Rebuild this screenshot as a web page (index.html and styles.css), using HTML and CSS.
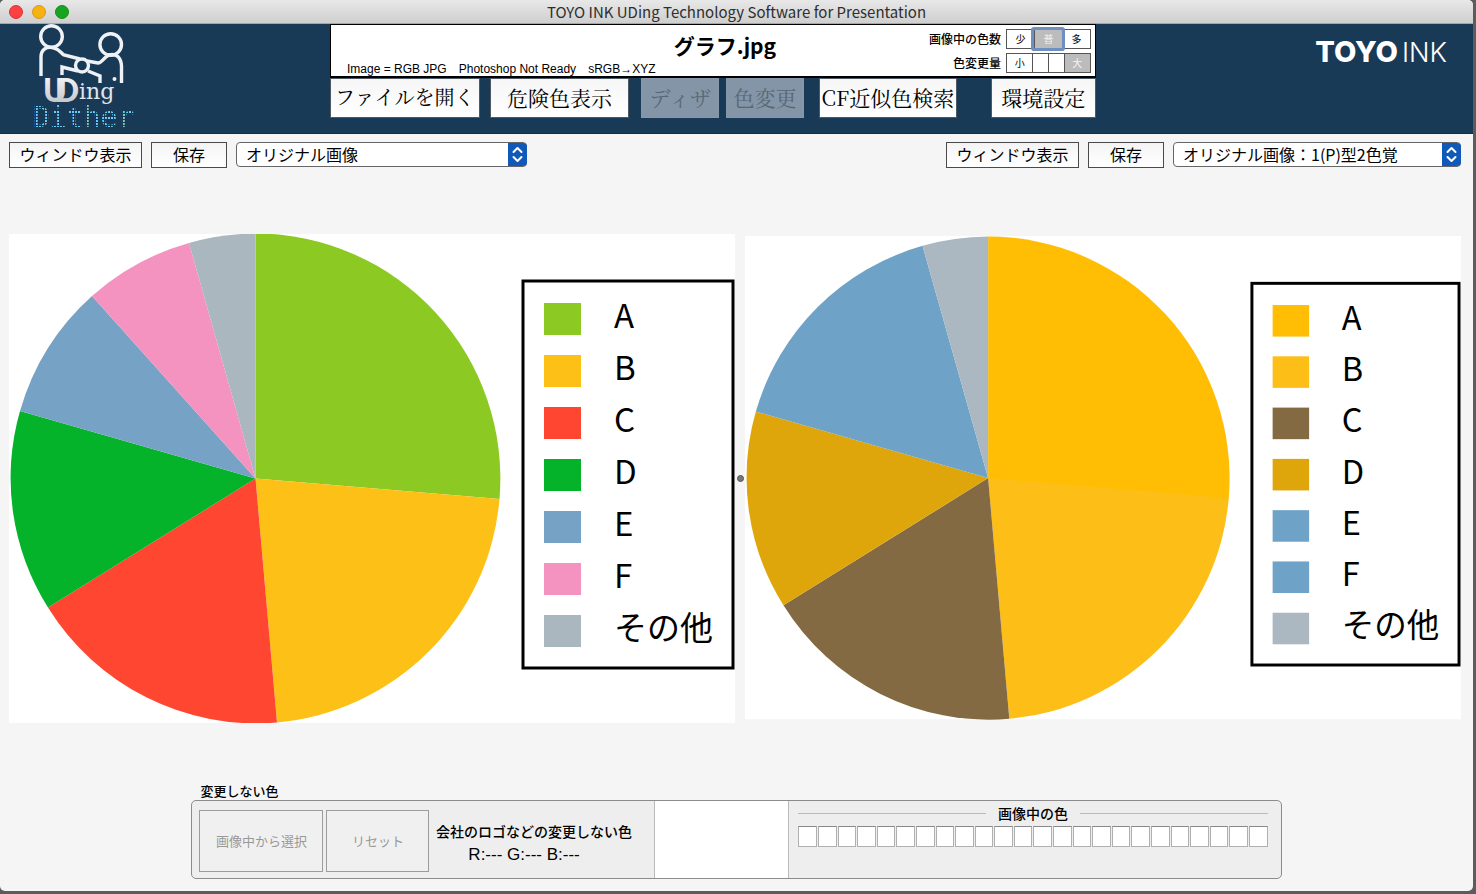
FILE: index.html
```html
<!DOCTYPE html>
<html lang="ja">
<head>
<meta charset="utf-8">
<title>TOYO INK UDing Technology Software for Presentation</title>
<link rel="stylesheet" href="styles.css">
</head>
<body>
<div class="window">
  <header class="titlebar">
    <div class="lights"><span class="light close"></span><span class="light minimize"></span><span class="light zoom"></span></div>
    <h1 class="window-title">TOYO INK UDing Technology Software for Presentation</h1>
  </header>

  <section class="banner">
    <svg class="uding-logo" viewBox="0 0 110 109" width="110" height="109" role="img" aria-label="UDing Dither">
      <defs>
        <linearGradient id="silver" x1="0" y1="0" x2="0" y2="1"><stop offset="0" stop-color="#fff"/><stop offset="1" stop-color="#b9bdc1"/></linearGradient>
        <pattern id="dots" width="3" height="3" patternUnits="userSpaceOnUse"><rect width="2" height="2" fill="#6accf4"/></pattern>
      </defs>
      <g fill="none" stroke="#eef1f6" stroke-width="3.4">
        <circle cx="21.5" cy="12.5" r="10.8"/>
        <circle cx="80.7" cy="20.5" r="10.8"/>
        <path d="M11 52V33C11 25 17 22 24 24C29 25 31 29 34 31L50 35"/>
        <path d="M32 51V43L48 47M58 47L70 52V59"/>
        <path d="M57 37L68 39C72 39 73 34 79 31C87 29 91 34 91.500 42V59"/>
        <circle cx="52" cy="41.500" r="6.500"/>
      </g>
      <circle cx="84.500" cy="55" r="2" fill="#eef1f6"/>
      <text class="logo-ud" x="13" y="78" fill="url(#silver)">U<tspan dx="-12">D</tspan></text>
      <text class="logo-ing" x="49" y="75">ing</text>
      <text class="logo-dither" x="3" y="103" fill="url(#dots)">Dither</text>
    </svg>

    <div class="control">
      <div class="info">
        <h2 class="file-name">グラフ.jpg</h2>
        <p class="status"><span>Image = RGB JPG</span><span>Photoshop Not Ready</span><span>sRGB→XYZ</span></p>
        <div class="options">
          <span class="option-label" id="count-label">画像中の色数</span>
          <div class="segments" role="group" aria-labelledby="count-label">
            <button class="segment">少</button><button class="segment selected focused">普</button><button class="segment">多</button>
          </div>
          <span class="option-label" id="amount-label">色変更量</span>
          <div class="segments" role="group" aria-labelledby="amount-label">
            <button class="segment">小</button><button class="segment narrow" aria-label="2"></button><button class="segment narrow" aria-label="3"></button><button class="segment selected">大</button>
          </div>
        </div>
      </div>
      <nav class="actions">
        <button class="action open">ファイルを開く</button>
        <button class="action danger">危険色表示</button>
        <button class="action dither" disabled>ディザ</button>
        <button class="action change" disabled>色変更</button>
        <button class="action search">CF近似色検索</button>
        <button class="action settings">環境設定</button>
      </nav>
    </div>

    <div class="brand"><span class="brand-bold">TOYO</span><span class="brand-light">INK</span></div>
  </section>

  <main class="panes">
    <section class="pane">
      <div class="toolbar">
        <button class="tool show">ウィンドウ表示</button>
        <button class="tool save">保存</button>
        <div class="picker">
          <select aria-label="左の画像"><option>オリジナル画像</option></select>
          <svg class="picker-cap" viewBox="0 0 19 23" width="19" height="23" aria-hidden="true"><path d="M5.500 9L9.500 5L13.500 9M5.500 14L9.500 18L13.500 14"/></svg>
        </div>
      </div>
      <div class="stage">
        <svg class="chart original" viewBox="0 0 726 489" role="img" aria-label="円グラフ">
          <rect width="726" height="489" fill="#fff"/>
          <path class="a" d="M246.500 244.500V-.5A245 245 0 0 1 490.500 265Z"/>
          <path class="b" d="M246.500 244.500L490.500 265A245 245 0 0 1 268 488.500Z"/>
          <path class="c" d="M246.500 244.500L268 488.500A245 245 0 0 1 39 373.500Z"/>
          <path class="d" d="M246.500 244.500L39 373.500A243 243 0 0 1 11 177Z"/>
          <path class="e" d="M246.500 244.500L11 177A245 245 0 0 1 83 62Z"/>
          <path class="f" d="M246.500 244.500L83 62A245 245 0 0 1 180 9Z"/>
          <path class="g" d="M246.500 244.500L180 9A245 245 0 0 1 246.500 -.5Z"/>
          <rect class="legend-box" x="514" y="47" width="210" height="387"/>
          <rect class="a" x="535" y="69" width="37" height="32"/><text x="605" y="94">A</text>
          <rect class="b" x="535" y="121" width="37" height="32"/><text x="605" y="146">B</text>
          <rect class="c" x="535" y="173" width="37" height="32"/><text x="605" y="198">C</text>
          <rect class="d" x="535" y="225" width="37" height="32"/><text x="605" y="250">D</text>
          <rect class="e" x="535" y="277" width="37" height="32"/><text x="605" y="302">E</text>
          <rect class="f" x="535" y="329" width="37" height="32"/><text x="605" y="354">F</text>
          <rect class="g" x="535" y="381" width="37" height="32"/><text x="605" y="406">その他</text>
        </svg>
      </div>
    </section>

    <div class="splitter"><span class="grip"></span></div>

    <section class="pane">
      <div class="toolbar end">
        <button class="tool show">ウィンドウ表示</button>
        <button class="tool save">保存</button>
        <div class="picker">
          <select aria-label="右の画像"><option>オリジナル画像：1(P)型2色覚</option></select>
          <svg class="picker-cap" viewBox="0 0 19 23" width="19" height="23" aria-hidden="true"><path d="M5.500 9L9.500 5L13.500 9M5.500 14L9.500 18L13.500 14"/></svg>
        </div>
      </div>
      <div class="stage">
        <svg class="chart simulated" viewBox="0 0 726 490" role="img" aria-label="円グラフ 1(P)型2色覚">
          <rect width="726" height="490" fill="#fff"/>
          <path class="b" d="M246.500 245.500L400 60L490.500 266A245 245 0 0 1 268 489.500Z"/>
          <path class="a" d="M246.500 245.500V.5A245 245 0 0 1 490.500 266Z"/>
          <path class="c" d="M246.500 245.500L268 489.500A245 245 0 0 1 39 374.500Z"/>
          <path class="d" d="M246.500 245.500L39 374.500A243 243 0 0 1 11 178Z"/>
          <path class="e" d="M246.500 245.500L11 178A245 245 0 0 1 180 10Z"/>
          <path class="g" d="M246.500 245.500L180 10A245 245 0 0 1 246.500 .5Z"/>
          <rect class="legend-box" x="514" y="48" width="210" height="387"/>
          <rect class="a" x="535" y="70" width="37" height="32"/><text x="605" y="95">A</text>
          <rect class="b" x="535" y="122" width="37" height="32"/><text x="605" y="147">B</text>
          <rect class="c" x="535" y="174" width="37" height="32"/><text x="605" y="199">C</text>
          <rect class="d" x="535" y="226" width="37" height="32"/><text x="605" y="251">D</text>
          <rect class="e" x="535" y="278" width="37" height="32"/><text x="605" y="303">E</text>
          <rect class="f" x="535" y="330" width="37" height="32"/><text x="605" y="355">F</text>
          <rect class="g" x="535" y="382" width="37" height="32"/><text x="605" y="407">その他</text>
        </svg>
      </div>
    </section>
  </main>

  <footer class="locked">
    <h2 class="locked-title">変更しない色</h2>
    <div class="locked-box">
      <div class="locked-tools">
        <button class="flat pick" disabled>画像中から選択</button>
        <button class="flat reset" disabled>リセット</button>
        <div class="locked-info">
          <p class="locked-note">会社のロゴなどの変更しない色</p>
          <p class="rgb">R:--- G:--- B:---</p>
        </div>
      </div>
      <div class="preview"></div>
      <div class="palette">
        <h3 class="palette-title">画像中の色</h3>
        <div class="swatches">
          <i></i><i></i><i></i><i></i><i></i><i></i><i></i><i></i><i></i><i></i><i></i><i></i><i></i><i></i><i></i><i></i><i></i><i></i><i></i><i></i><i></i><i></i><i></i><i></i>
        </div>
      </div>
    </div>
  </footer>
</div>
</body>
</html>
```

FILE: styles.css
```css
* { box-sizing: border-box; }

body {
  margin: 0;
  min-height: 100vh;
  display: flex;
  padding: 0 3px 3px 0;
  background: #5c5c5c;
  color: #000;
  font-family: "Liberation Sans", "Noto Sans CJK JP", sans-serif;
}

h1, h2, h3, p { margin: 0; font-weight: 400; }
button { margin: 0; padding: 0; color: #000; font-family: inherit; white-space: nowrap; }

.window {
  flex: 1;
  display: flex;
  flex-direction: column;
  background: #f5f5f5;
  border-radius: 5px;
  overflow: hidden;
}

/* Title bar */
.titlebar {
  height: 24px;
  display: grid;
  grid-template-columns: 1fr auto 1fr;
  align-items: center;
  background: linear-gradient(#e8e8e8, #cfcfcf);
  border-bottom: 1px solid #a6a6a6;
}
.lights { display: flex; gap: 9px; padding-left: 9px; }
.light { width: 14px; height: 14px; border-radius: 50%; border: 1px solid; }
.close { background: #fc4143; border-color: #dc3335; }
.minimize { background: #f6b113; border-color: #d99a10; }
.zoom { background: #18a320; border-color: #14901b; }
.window-title { font: 15px/20px "Noto Sans CJK JP", sans-serif; color: #2e2e2e; }

/* Banner */
.banner {
  height: 110px;
  display: grid;
  grid-template-columns: 330fr 766fr 377fr;
  background: #193a56;
  border-bottom: 1px solid #102d45;
}
.uding-logo { margin-left: 30px; overflow: visible; }
.logo-ud { font: 900 32px Lato, sans-serif; }
.logo-ing { font: 22px "DejaVu Serif", serif; fill: #e2e5e8; }
.logo-dither { font: 28px "DejaVu Sans Mono", monospace; }

.info {
  height: 54px;
  display: grid;
  grid-template-columns: 1fr auto;
  grid-template-rows: 36px 16px;
  position: relative;
  background: #fff;
  border: 1px solid #000;
  border-width: 1px 1px 2px;
}
.file-name {
  grid-column: 1 / -1;
  font: 700 21px/40px "Noto Sans CJK JP", sans-serif;
  text-align: center;
  padding-left: 24px;
}
.status { display: flex; gap: 12px; padding-left: 16px; font-size: 12px; line-height: 16px; }
.options {
  position: absolute;
  top: 4px;
  right: 4px;
  display: grid;
  grid-template-columns: auto 85px;
  gap: 4px 5px;
  align-items: center;
}
.option-label { font: 500 12px/16px "Noto Sans CJK JP", sans-serif; text-align: right; }
.segments { display: flex; height: 20px; border: 1px solid #555; }
.segment {
  flex: 26;
  background: #fff;
  border: 0;
  font: 10px/16px "Noto Sans CJK JP", sans-serif;
}
.segment + .segment { border-left: 1px solid #555; }
.narrow { flex: 15; }
.selected { background: #bcbcbc; color: #f4f4f4; }
.focused { box-shadow: 0 0 0 3px #6f8fc0; z-index: 1; border-radius: 1px; }

.actions { display: flex; }
.action {
  height: 40px;
  padding-bottom: 2px;
  background: linear-gradient(#f6f6f6, #fff);
  border: 1px solid #4d5a64;
  font: 400 21px/34px "Noto Serif CJK JP", "Liberation Serif", serif;
}
.action:disabled { background: #8395a6; color: #586776; border-color: #8798a8; }
.open { flex: 150; font-size: 20px; margin-right: 10px; }
.danger { flex: 140; margin-right: 12px; }
.dither { flex: 77; margin-right: 7px; }
.change { flex: 77; margin-right: 15px; }
.search { flex: 138; margin-right: 34px; }
.settings { flex: 105; }

.brand {
  display: flex;
  justify-content: flex-end;
  align-items: baseline;
  gap: 4px;
  height: 44px;
  padding: 12px 26px 0 0;
  color: #fff;
  font: 27px/32px Inter, sans-serif;
}
.brand-bold { font-size: 29px; font-weight: 800; }
.brand-light { font-weight: 300; }

/* Image panes */
.panes {
  flex: 1;
  display: grid;
  grid-template-columns: 726fr 10px 716fr;
  padding: 8px 12px 0 9px;
}
.pane { display: flex; flex-direction: column; min-width: 0; }
.toolbar { display: flex; gap: 9px; height: 26px; }
.end { justify-content: flex-end; }
.tool {
  padding-bottom: 2px;
  background: linear-gradient(#f4f4f4, #fff);
  border: 1px solid #4a4a4a;
  font: 16px/20px "Noto Sans CJK JP", sans-serif;
}
.show { width: 133px; }
.save { width: 76px; }
.picker { position: relative; width: 291px; height: 25px; }
.end .picker { width: 288px; }
.picker select {
  appearance: none;
  width: 100%;
  height: 25px;
  margin: 0;
  padding: 0 24px 2px 9px;
  background: #fff;
  border: 1px solid #666;
  border-radius: 4px;
  color: #000;
  font: 16px/20px "Noto Sans CJK JP", sans-serif;
}
.picker-cap {
  position: absolute;
  top: 1px;
  right: 0;
  background: #1059b8;
  border-radius: 0 4px 4px 0;
  pointer-events: none;
}
.picker-cap path { fill: none; stroke: #fff; stroke-width: 2; stroke-linecap: round; stroke-linejoin: round; }

.stage { flex: 1; display: flex; align-items: center; padding-top: 6px; }
.chart { display: block; width: 100%; height: auto; }
.chart text { font: 400 33px "Noto Sans CJK JP", sans-serif; }
.legend-box { fill: #fff; stroke: #000; stroke-width: 3px; }
.original .a { fill: #8cc923; }
.original .b { fill: #fdc016; }
.original .c { fill: #fe4631; }
.original .d { fill: #05b32b; }
.original .e { fill: #75a2c5; }
.original .f { fill: #f492c0; }
.original .g { fill: #aab7bf; }
.simulated .a { fill: #ffbe04; }
.simulated .b { fill: #fdbe18; }
.simulated .c { fill: #836a42; }
.simulated .d { fill: #dfa60c; }
.simulated .e, .simulated .f { fill: #6fa2c7; }
.simulated .g { fill: #abb7c1; }

.splitter { display: flex; align-items: center; justify-content: center; padding-top: 32px; }
.grip { width: 7px; height: 7px; flex: none; border-radius: 50%; background: #777; border: 1px solid #555; }

/* Locked colours */
.locked { width: 74%; margin: 0 auto; padding-bottom: 12px; }
.locked-title { padding-left: 9px; font: 500 13px/18px "Noto Sans CJK JP", sans-serif; }
.locked-box {
  display: grid;
  grid-template-columns: 462fr 136fr 492fr;
  height: 79px;
  background: #eee;
  border: 1px solid #8c8c8c;
  border-radius: 5px;
  overflow: hidden;
}
.locked-tools { display: flex; gap: 3px; padding: 9px 0 6px 7px; }
.flat { background: #f0f0f0; border: 1px solid #9c9c9c; color: #999; font: 13px/20px "Noto Sans CJK JP", sans-serif; }
.pick { width: 124px; }
.reset { width: 103px; }
.locked-info { flex: 1; padding: 11px 18px 0 0; text-align: center; }
.locked-note { font: 500 14px/20px "Noto Sans CJK JP", sans-serif; white-space: nowrap; }
.rgb { font-size: 17px; line-height: 28px; padding-right: 20px; }
.preview { background: #fff; border: 1px solid #bbb; border-width: 0 1px; }
.palette { padding: 2px 13px 0 9px; }
.palette-title {
  display: flex;
  align-items: center;
  gap: 12px;
  font: 500 14px/20px "Noto Sans CJK JP", sans-serif;
}
.palette-title::before, .palette-title::after { content: ""; flex: 1; height: 1px; background: #bbb; }
.swatches { display: grid; grid-template-columns: repeat(24, 1fr); gap: 1px; margin-top: 3px; }
.swatches i { height: 21px; background: #fff; border: 1px solid #b0b0b0; border-top-color: #888; }
```
